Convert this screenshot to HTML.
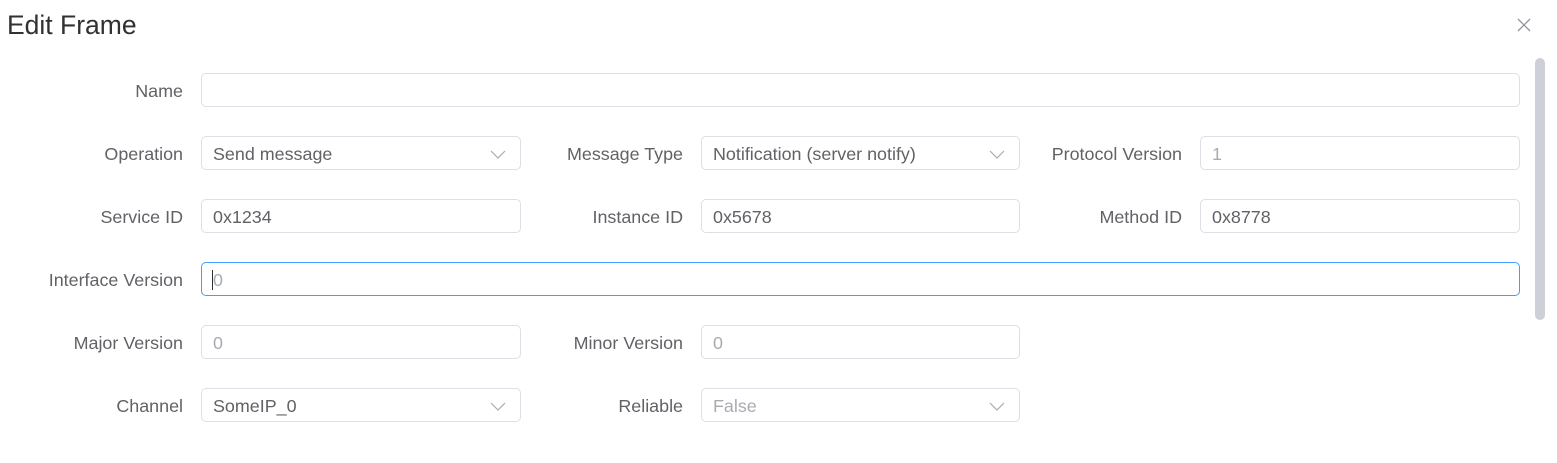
<!DOCTYPE html>
<html><head><style>
body{margin:0;width:1557px;height:463px;background:#fff;font-family:"Liberation Sans",Arial,sans-serif;position:relative;overflow:hidden}
.t{position:absolute;left:7px;top:10px;font-size:26.5px;color:#303133}
.x{position:absolute;left:1516px;top:17px}
.sb{position:absolute;left:1535px;top:58px;width:10px;height:262px;border-radius:5px;background:#cdd0d6}
.l{position:absolute;width:180px;text-align:right;font-size:17.9px;color:#606266;line-height:36px}
.i{position:absolute;height:32px;border:1px solid #dcdfe6;border-radius:5px;font-size:17.9px;color:#606266;line-height:34px;padding-left:11px;box-sizing:content-box}
.p{color:#a8abb2}
.f{border-color:#409eff}
.a{position:absolute;right:14px;top:12px}
</style></head><body>
<div class="t">Edit Frame</div>
<svg class="x" width="16" height="16" viewBox="0 0 16 16"><path d="M2 2L14 14M14 2L2 14" stroke="#909399" stroke-width="1.3"/></svg>
<div class="sb"></div>

<div class="l" style="left:3px;top:73px">Name</div>
<div class="i" style="left:201px;top:73px;width:1306px"></div>

<div class="l" style="left:3px;top:136px">Operation</div>
<div class="i" style="left:201px;top:136px;width:307px">Send message<svg class="a" width="16" height="10"><path d="M1 2L8 9L15 2" fill="none" stroke="#a8abb2" stroke-width="1.2"/></svg></div>
<div class="l" style="left:503px;top:136px">Message Type</div>
<div class="i" style="left:701px;top:136px;width:306px">Notification (server notify)<svg class="a" width="16" height="10"><path d="M1 2L8 9L15 2" fill="none" stroke="#a8abb2" stroke-width="1.2"/></svg></div>
<div class="l" style="left:1002px;top:136px">Protocol Version</div>
<div class="i p" style="left:1200px;top:136px;width:307px">1</div>

<div class="l" style="left:3px;top:199px">Service ID</div>
<div class="i" style="left:201px;top:199px;width:307px">0x1234</div>
<div class="l" style="left:503px;top:199px">Instance ID</div>
<div class="i" style="left:701px;top:199px;width:306px">0x5678</div>
<div class="l" style="left:1002px;top:199px">Method ID</div>
<div class="i" style="left:1200px;top:199px;width:307px">0x8778</div>

<div class="l" style="left:3px;top:262px">Interface Version</div>
<div class="i p f" style="left:201px;top:262px;width:1306px"><span style="border-left:1px solid #303133;margin-left:-1px">0</span></div>

<div class="l" style="left:3px;top:325px">Major Version</div>
<div class="i p" style="left:201px;top:325px;width:307px">0</div>
<div class="l" style="left:503px;top:325px">Minor Version</div>
<div class="i p" style="left:701px;top:325px;width:306px">0</div>

<div class="l" style="left:3px;top:388px">Channel</div>
<div class="i" style="left:201px;top:388px;width:307px">SomeIP_0<svg class="a" width="16" height="10"><path d="M1 2L8 9L15 2" fill="none" stroke="#a8abb2" stroke-width="1.2"/></svg></div>
<div class="l" style="left:503px;top:388px">Reliable</div>
<div class="i p" style="left:701px;top:388px;width:306px">False<svg class="a" width="16" height="10"><path d="M1 2L8 9L15 2" fill="none" stroke="#a8abb2" stroke-width="1.2"/></svg></div>
</body></html>
